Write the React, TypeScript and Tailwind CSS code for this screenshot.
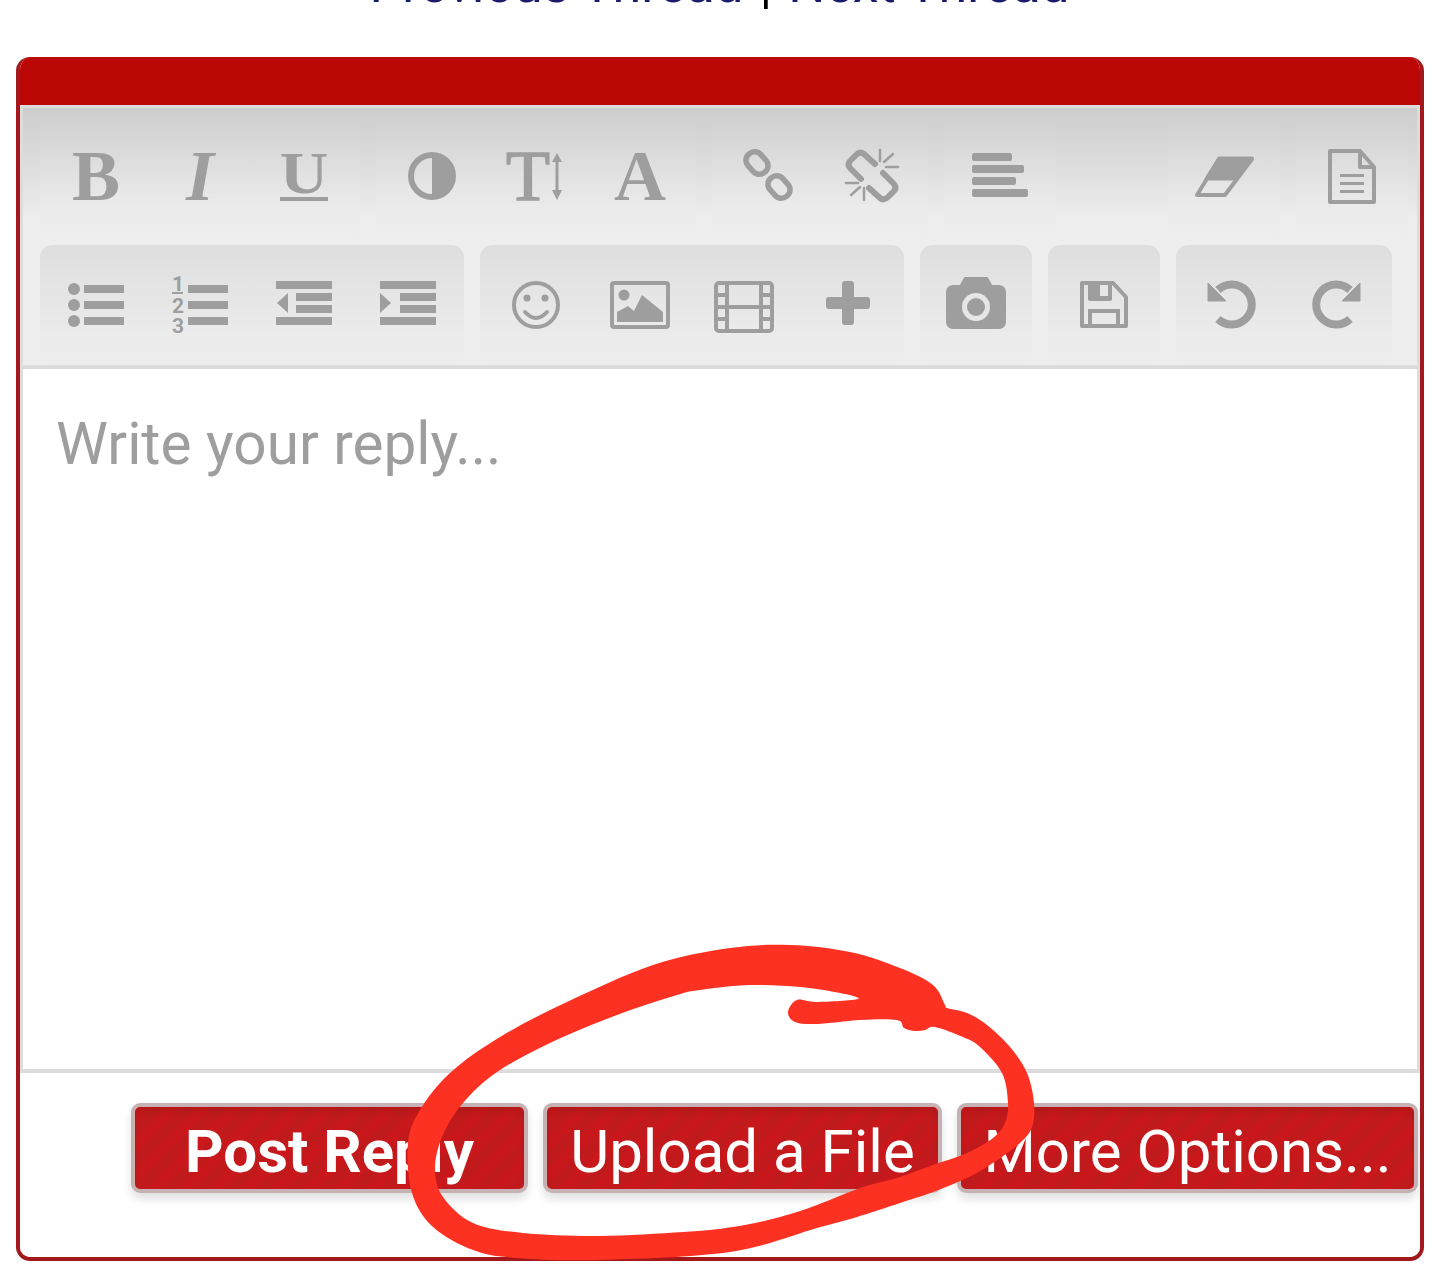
import React from "react";

const G = "#9e9e9e";

function Svg({ children }: { children: React.ReactNode }) {
  return (
    <svg width="72" height="72" viewBox="-36 -36 72 72" className="overflow-visible" fill={G}>
      {children}
    </svg>
  );
}

function Letter({ ch, x = 0, y = 24, size = 72, italic = false, weight = 700 }: { ch: string; x?: number; y?: number; size?: number; italic?: boolean; weight?: number }) {
  return (
    <text x={x} y={y} textAnchor="middle" fontSize={size} fontWeight={weight} fontStyle={italic ? "italic" : "normal"} fontFamily="'Liberation Serif', serif" fill={G}>
      {ch}
    </text>
  );
}

const Bars = ({ rows }: { rows: [number, number, number][] }) => (
  <>
    {rows.map(([x1, x2, y], i) => (
      <rect key={i} x={x1} y={y} width={x2 - x1} height={8} />
    ))}
  </>
);

const arrow = (
  <>
    <path d="M-14,-14 A20,20 0 1 1 -14,15" fill="none" stroke={G} strokeWidth="8" />
    <path d="M-24,-21 V-3 H-6 Z" stroke={G} strokeWidth="1" strokeLinejoin="round" />
  </>
);

const icons: Record<string, React.ReactNode> = {
  bold: <Letter ch="B" />,
  italic: <Letter ch="I" italic />,
  underline: (
    <>
      <g transform="scale(1.12 1)">
        <Letter ch="U" size={60} y={17} />
      </g>
      <rect x={-24} y={21} width={48} height={4} />
    </>
  ),
  contrast: <path fillRule="evenodd" d="M0,-24 A24,24 0 1,0 0,24 A24,24 0 1,0 0,-24 Z M0,-18 A18,18 0 0,0 0,18 Z" />,
  size: (
    <>
      <text x={-8} y={24} textAnchor="middle" fontSize={72} fontFamily="'Liberation Serif', serif" fill={G} stroke={G} strokeWidth={1.5}>
        T
      </text>
      <path d="M21,-23 L26,-14 L22.5,-14 L22.5,14 L26,14 L21,24 L16,14 L19.5,14 L19.5,-14 L16,-14 Z" />
    </>
  ),
  font: <Letter ch="A" />,
  link: (
    <g fill="none" stroke={G} strokeWidth="5.5">
      <rect x={-23} y={-21.5} width={24} height={17} rx={8} transform="rotate(48 -11 -13)" />
      <rect x={-1} y={2.5} width={24} height={17} rx={8} transform="rotate(48 11 11)" />
    </g>
  ),
  unlink: (
    <g fill="none" stroke={G} strokeLinecap="round" strokeLinejoin="round">
      <path strokeWidth="6" d="M3,-12 L-8,-22 Q-12,-25 -16,-21 L-22,-15 Q-25,-12 -22,-8 L-11,3" />
      <path strokeWidth="6" d="M-3,12 L8,22 Q12,25 16,21 L22,15 Q25,12 22,8 L11,-3" />
      <path strokeWidth="2.5" d="M8,-26 V-15 M12,-14 L21,-22 M14,-9 H26 M-26,7 H-14 M-21,19 L-12,11 M-8,12 V24" />
    </g>
  ),
  align: (
    <>
      <rect x={-28} y={-23} width={40} height={8} rx={2} />
      <rect x={-28} y={-11} width={52} height={8} rx={2} />
      <rect x={-28} y={1} width={44} height={8} rx={2} />
      <rect x={-28} y={13} width={56} height={8} rx={2} />
    </>
  ),
  eraser: (
    <>
      <path d="M-5,-17 L28,-17 L1,19 L-27,19 Z" fill="none" stroke={G} strokeWidth="4" strokeLinejoin="round" />
      <path d="M-5,-18 L28,-18 L11,3 L-18,3 Z" stroke={G} strokeWidth="3" strokeLinejoin="round" />
    </>
  ),
  doc: (
    <>
      <path d="M-22,-25 H8 L22,-9 V26 H-22 Z M8,-25 V-9 H22" fill="none" stroke={G} strokeWidth="4" strokeLinejoin="round" />
      <rect x={-12} y={-2} width={24} height={3} />
      <rect x={-12} y={6} width={24} height={3} />
      <rect x={-12} y={14} width={24} height={3} />
    </>
  ),
  ul: (
    <>
      <circle cx={-22} cy={-15} r={6} />
      <circle cx={-22} cy={1} r={6} />
      <circle cx={-22} cy={17} r={6} />
      <Bars rows={[[-12, 28, -19], [-12, 28, -3], [-12, 28, 13]]} />
    </>
  ),
  ol: (
    <>
      <text x={-22} y={-13} textAnchor="middle" fontSize={21} fontWeight={700} fontFamily="Roboto, sans-serif" fill={G}>1</text>
      <text x={-22} y={9} textAnchor="middle" fontSize={21} fontWeight={700} fontFamily="Roboto, sans-serif" fill={G}>2</text>
      <text x={-22} y={29} textAnchor="middle" fontSize={21} fontWeight={700} fontFamily="Roboto, sans-serif" fill={G}>3</text>
      <rect x={-28} y={-12} width={11} height={2} />
      <Bars rows={[[-12, 28, -19], [-12, 28, -3], [-12, 28, 13]]} />
    </>
  ),
  outdent: (
    <>
      <Bars rows={[[-28, 28, -23], [-8, 28, -11], [-8, 28, 1], [-28, 28, 13]]} />
      <path d="M-16,-11 V9 L-27,-1 Z" />
    </>
  ),
  indent: (
    <>
      <Bars rows={[[-28, 28, -23], [-8, 28, -11], [-8, 28, 1], [-28, 28, 13]]} />
      <path d="M-28,-11 V9 L-17,-1 Z" />
    </>
  ),
  smile: (
    <>
      <circle cx={0} cy={1} r={22} fill="none" stroke={G} strokeWidth="4" />
      <circle cx={-9} cy={-6} r={3.5} />
      <circle cx={9} cy={-6} r={3.5} />
      <path d="M-11,8 Q0,20 11,8" fill="none" stroke={G} strokeWidth="4" strokeLinecap="round" />
    </>
  ),
  image: (
    <>
      <rect x={-28} y={-21} width={56} height={44} rx={2} fill="none" stroke={G} strokeWidth="4" />
      <circle cx={-16} cy={-9} r={5.5} />
      <path d="M-23,18 V8 L-12,2 L-6,7 L2,-9 L23,8 V18 Z" />
    </>
  ),
  film: (
    <g fill="none" stroke={G} strokeWidth="4">
      <rect x={-28} y={-21} width={56} height={48} rx={3} />
      <path d="M-17,-21 V27 M17,-21 V27 M-17,3 H17 M-28,-9 H-17 M-28,3 H-17 M-28,15 H-17 M17,-9 H28 M17,3 H28 M17,15 H28" />
    </g>
  ),
  plus: <path d="M-6,-20 Q-6,-23 -3,-23 H3 Q6,-23 6,-20 V-7 H19 Q22,-7 22,-4 V2 Q22,5 19,5 H6 V18 Q6,21 3,21 H-3 Q-6,21 -6,18 V5 H-19 Q-22,5 -22,2 V-4 Q-22,-7 -19,-7 H-6 Z" />,
  camera: (
    <>
      <path d="M-15,-19 L-11,-26 H11 L15,-19 Z" stroke={G} strokeWidth="2" strokeLinejoin="round" />
      <rect x={-30} y={-19} width={60} height={44} rx={7} />
      <circle cx={0} cy={3} r={14} fill="#e6e6e6" />
      <circle cx={0} cy={3} r={9} />
    </>
  ),
  save: (
    <>
      <path d="M-22,-21 H9 L22,-7 V22 H-22 Z" fill="none" stroke={G} strokeWidth="4" strokeLinejoin="round" />
      <rect x={-16} y={-23} width={24} height={20} rx={2} />
      <rect x={-4} y={-19} width={8} height={11} fill="#e6e6e6" />
      <rect x={-14} y={7} width={28} height={15} fill="none" stroke={G} strokeWidth="4" />
    </>
  ),
  undo: arrow,
  redo: <g transform="scale(-1 1)">{arrow}</g>,
};

function Group({ names, tone, className = "" }: { names: string[]; tone: "a" | "b"; className?: string }) {
  const bg = tone === "a" ? "bg-[linear-gradient(#d0d0d0,#ebebeb_75%,#ededed)]" : "bg-[linear-gradient(#dedede,#ebebeb_75%,#ededed)]";
  return (
    <div className={`flex h-[120px] items-start rounded-xl px-1 ${bg} ${className}`}>
      {names.map((n) => (
        <div key={n} className="flex h-[118px] w-[104px] items-center justify-center">
          <Svg>{icons[n]}</Svg>
        </div>
      ))}
    </div>
  );
}

function Btn({ label, className }: { label: string; className: string }) {
  return (
    <div
      className={`flex h-[90px] items-center justify-center whitespace-nowrap rounded-[9px] border-[4px] border-[#c6b2b2] bg-[repeating-linear-gradient(135deg,#c9181b_0,#c9181b_11px,#c11a1c_11px,#c11a1c_22px)] pt-[8px] text-[60px] leading-none text-white shadow-[0_6px_10px_rgba(0,0,0,0.12),inset_0_6px_6px_rgba(0,0,0,0.08)] ${className}`}
    >
      {label}
    </div>
  );
}

type P = [number, number];
function smooth(pts: P[]): string {
  const n = pts.length;
  let d = `M${pts[0][0]},${pts[0][1]} `;
  for (let i = 0; i < n; i++) {
    const p0 = pts[(i - 1 + n) % n];
    const p1 = pts[i];
    const p2 = pts[(i + 1) % n];
    const p3 = pts[(i + 2) % n];
    const c1x = p1[0] + (p2[0] - p0[0]) / 6;
    const c1y = p1[1] + (p2[1] - p0[1]) / 6;
    const c2x = p2[0] - (p3[0] - p1[0]) / 6;
    const c2y = p2[1] - (p3[1] - p1[1]) / 6;
    d += `C${c1x.toFixed(1)},${c1y.toFixed(1)} ${c2x.toFixed(1)},${c2y.toFixed(1)} ${p2[0]},${p2[1]} `;
  }
  return d + "Z ";
}

const outer: P[] = [[790,945],[850,952],[900,968],[933,985],[945,1005],[947,1008],[967,1013],[987,1025],[1010,1047],[1027,1073],[1034,1103],[1032,1127],[1020,1143],[993,1163],[967,1178],[933,1192],[900,1203],[857,1217],[817,1228],[730,1252],[600,1260],[517,1258],[473,1250],[433,1227],[412,1193],[408,1143],[420,1110],[450,1073],[500,1037],[567,1002],[653,965],[730,948]];
const inner: P[] = [[750,985],[700,990],[677,995],[617,1015],[550,1043],[497,1072],[463,1103],[442,1137],[435,1170],[443,1197],[473,1223],[523,1233],[600,1236],[683,1232],[733,1227],[780,1217],[817,1205],[860,1188],[900,1177],[933,1165],[967,1153],[993,1138],[1005,1123],[1008,1103],[1002,1073],[980,1047],[963,1037],[935,1027],[925,1030],[915,1031],[904,1028],[897,1020],[860,1020],[817,1024],[795,1022],[788,1012],[797,1000],[817,1002],[858,999],[840,993],[800,987]];

export default function App() {
  return (
    <div className="relative h-[1283px] w-[1439px] overflow-hidden bg-white font-['Roboto',sans-serif]">
      <div className="mt-[-51px] flex h-[72px] items-end justify-center gap-[16px] text-[52px] leading-[72px] text-[#1b1b6b]">
        <span>Previous Thread</span>
        <span className="text-black">|</span>
        <span>Next Thread</span>
      </div>
      <div className="ml-[16px] mr-[15px] mt-[36px] flex h-[1204px] flex-col overflow-hidden rounded-[14px] border-[4px] border-t-0 border-[#a3181a]">
        <div className="h-[48px] shrink-0 bg-[#bb0706]" />
        <div className="border-x-[3px] border-t-[3px] border-b-[4px] border-[#dcdcdc]">
          <div className="bg-[linear-gradient(#cdcdcd,#eeeeee_115px)] px-[17px] pt-[9px]">
            <div className="flex gap-4">
              <Group tone="a" names={["bold", "italic", "underline"]} />
              <Group tone="a" names={["contrast", "size", "font"]} />
              <Group tone="a" names={["link", "unlink"]} />
              <Group tone="a" names={["align"]} />
              <Group tone="a" names={["eraser"]} className="ml-[96px]" />
              <Group tone="a" names={["doc"]} />
            </div>
            <div className="mt-2 flex gap-4">
              <Group tone="b" names={["ul", "ol", "outdent", "indent"]} />
              <Group tone="b" names={["smile", "image", "film", "plus"]} />
              <Group tone="b" names={["camera"]} />
              <Group tone="b" names={["save"]} />
              <Group tone="b" names={["undo", "redo"]} />
            </div>
          </div>
          <div className="h-[704px] border-t-[4px] border-[#dcdcdc] bg-white px-[33px] pt-[39px] text-[58.5px] leading-[72px] text-[#9e9e9e]">
            Write your reply...
          </div>
        </div>
        <div className="flex flex-1 items-start justify-end gap-[15px] bg-white pr-[2px] pt-[30px]">
          <Btn label="Post Reply" className="w-[397px] font-bold" />
          <Btn label="Upload a File" className="w-[399px]" />
          <Btn label="More Options..." className="w-[461px]" />
        </div>
      </div>
      <svg className="pointer-events-none absolute left-0 top-0" width="1439" height="1283" viewBox="0 0 1439 1283">
        <path fill="#fd3122" fillRule="evenodd" d={smooth(outer) + smooth(inner)} />
      </svg>
    </div>
  );
}
